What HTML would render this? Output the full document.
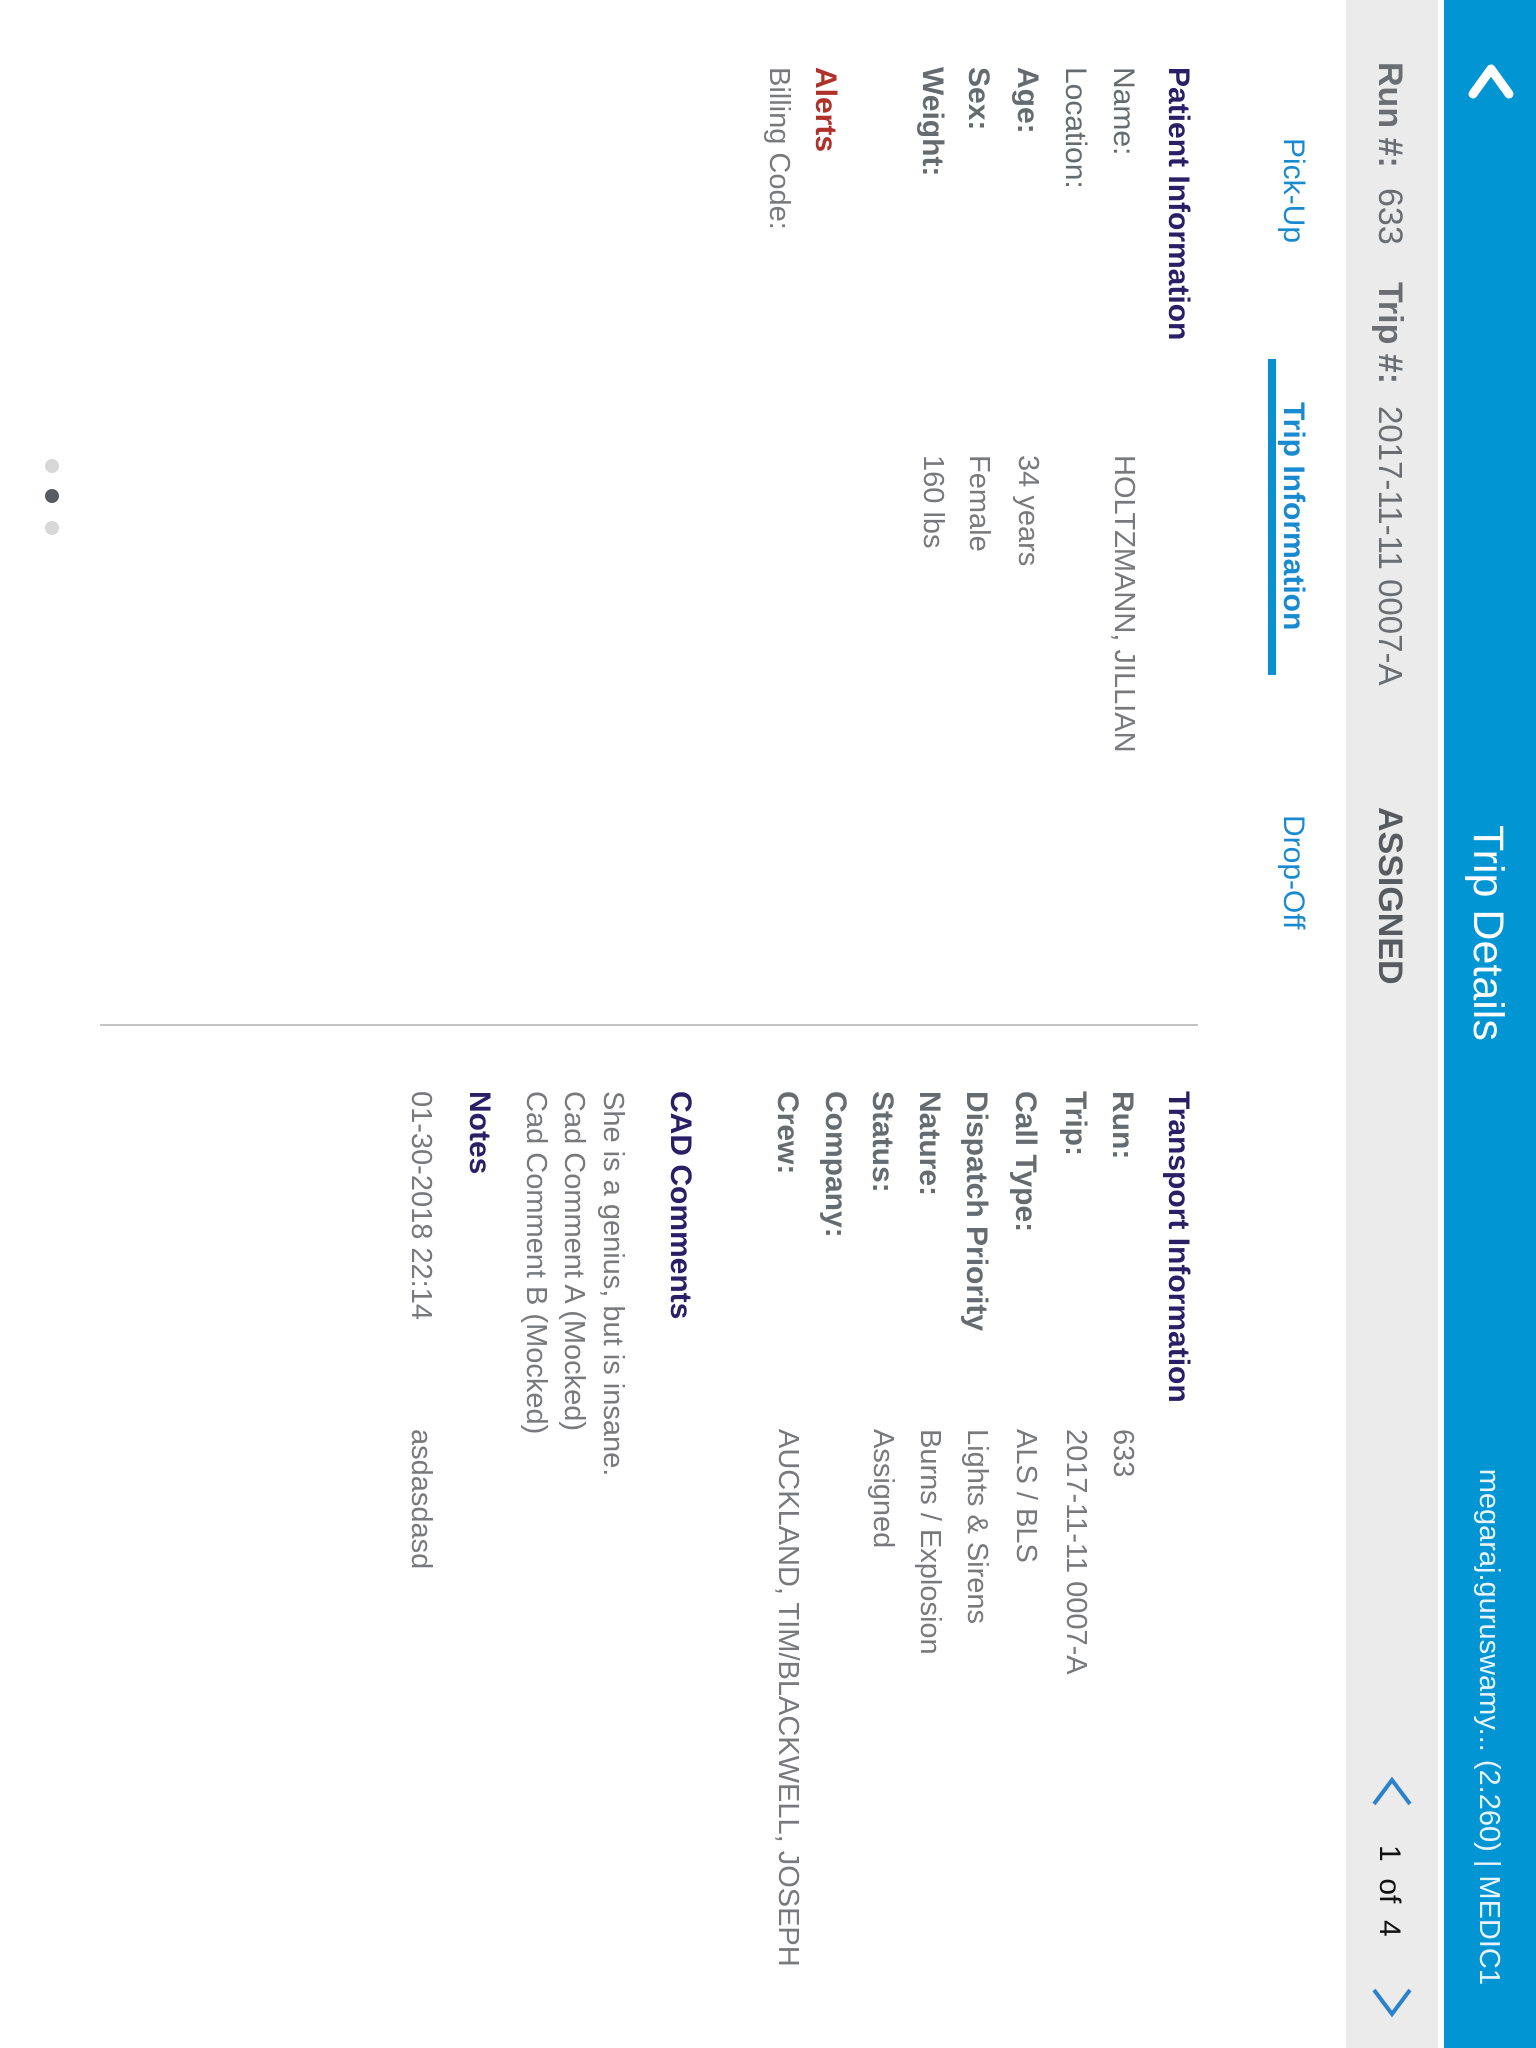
<!DOCTYPE html>
<html><head><meta charset="utf-8">
<style>
html,body{margin:0;padding:0;width:1536px;height:2048px;overflow:hidden;background:#fff}
#r{position:absolute;left:0;top:0;width:2048px;height:1536px;transform-origin:0 0;transform:translateX(1536px) rotate(90deg);background:#fff;font-family:"Liberation Sans",sans-serif}
.t{position:absolute;line-height:1;white-space:nowrap}
.f30{font-size:30px}
.lab{color:#666b70;font-size:30px}
.b{font-weight:bold}
.val{color:#77797c;font-size:29px}
.h{color:#2a1f66;font-weight:bold;font-size:30px}
</style></head><body>
<div id="r">
  <div style="position:absolute;left:0;top:0;width:2048px;height:92px;background:#0295d3"></div>
  <div class="t" style="left:825px;top:27px;font-size:43px;color:#fff">Trip Details</div>
  <div class="t" style="right:63px;top:33px;font-size:29px;color:#e8f4fb">megaraj.guruswamy... (2.260) | MEDIC1</div>

  <div style="position:absolute;left:0;top:98px;width:2048px;height:92px;background:#ebebeb"></div>
  <div class="t" style="left:62px;top:129px;font-size:34px;color:#6a6e72"><b>Run #:</b></div>
  <div class="t" style="left:188px;top:129px;font-size:34px;color:#6a6e72">633</div>
  <div class="t" style="left:282px;top:129px;font-size:34px;color:#6a6e72"><b>Trip #:</b></div>
  <div class="t" style="left:406px;top:129px;font-size:33px;color:#6a6e72">2017-11-11 0007-A</div>
  <div class="t" style="left:807px;top:129px;font-size:34px;color:#575b5f;font-weight:bold">ASSIGNED</div>
  <div class="t" style="left:1845px;top:132px;font-size:30px;color:#111">1&nbsp;&nbsp;of&nbsp;&nbsp;4</div>

  <svg style="position:absolute;left:0;top:0" width="2048" height="200">
    <polyline points="94,27 69,45 94,63" fill="none" stroke="#fff" stroke-width="9" stroke-linecap="round" stroke-linejoin="round"/>
    <polyline points="1804,126 1780,144 1804,162" fill="none" stroke="#2b82c9" stroke-width="4"/>
    <polyline points="1990,126 2014,144 1990,162" fill="none" stroke="#2b82c9" stroke-width="4"/>
  </svg>

  <div class="t f30" style="left:138px;top:228px;color:#1a8ad0">Pick-Up</div>
  <div class="t f30 b" style="left:402px;top:228px;color:#1a8ad0">Trip Information</div>
  <div class="t f30" style="left:815px;top:228px;color:#1a8ad0">Drop-Off</div>
  <div style="position:absolute;left:359px;top:260px;width:316px;height:8px;background:#0a8fd2"></div>

  <div class="t h" style="left:67px;top:343px">Patient Information</div>
  <div class="t lab" style="left:67px;top:398px">Name:</div>
  <div class="t lab" style="left:67px;top:446px">Location:</div>
  <div class="t lab b" style="left:67px;top:494px">Age:</div>
  <div class="t lab b" style="left:67px;top:543px">Sex:</div>
  <div class="t lab b" style="left:67px;top:589px">Weight:</div>
  <div class="t val" style="left:455px;top:398px">HOLTZMANN, JILLIAN</div>
  <div class="t val" style="left:455px;top:494px">34 years</div>
  <div class="t val" style="left:455px;top:543px">Female</div>
  <div class="t val" style="left:455px;top:589px">160 lbs</div>
  <div class="t f30 b" style="left:67px;top:696px;color:#b0302a">Alerts</div>
  <div class="t val" style="left:67px;top:743px">Billing Code:</div>

  <div style="position:absolute;left:1024px;top:338px;width:2px;height:1098px;background:#c4c4c4"></div>

  <div class="t h" style="left:1091px;top:343px">Transport Information</div>
  <div class="t lab b" style="left:1091px;top:399px">Run:</div>
  <div class="t lab b" style="left:1091px;top:446px">Trip:</div>
  <div class="t lab b" style="left:1091px;top:496px">Call Type:</div>
  <div class="t lab b" style="left:1091px;top:545px">Dispatch Priority</div>
  <div class="t lab b" style="left:1091px;top:592px">Nature:</div>
  <div class="t lab b" style="left:1091px;top:639px">Status:</div>
  <div class="t lab b" style="left:1091px;top:686px">Company:</div>
  <div class="t lab b" style="left:1091px;top:734px">Crew:</div>
  <div class="t val" style="left:1429px;top:399px">633</div>
  <div class="t val" style="left:1429px;top:446px">2017-11-11 0007-A</div>
  <div class="t val" style="left:1429px;top:496px">ALS / BLS</div>
  <div class="t val" style="left:1429px;top:545px">Lights &amp; Sirens</div>
  <div class="t val" style="left:1429px;top:592px">Burns / Explosion</div>
  <div class="t val" style="left:1429px;top:639px">Assigned</div>
  <div class="t val" style="left:1429px;top:734px">AUCKLAND, TIM/BLACKWELL, JOSEPH</div>
  <div class="t h" style="left:1091px;top:841px">CAD Comments</div>
  <div class="t val" style="left:1091px;top:909px">She is a genius, but is insane.</div>
  <div class="t val" style="left:1091px;top:948px">Cad Comment A (Mocked)</div>
  <div class="t val" style="left:1091px;top:986px">Cad Comment B (Mocked)</div>
  <div class="t h" style="left:1091px;top:1042px">Notes</div>
  <div class="t val" style="left:1091px;top:1101px">01-30-2018 22:14</div>
  <div class="t val" style="left:1429px;top:1101px">asdasdasd</div>

  <div style="position:absolute;left:459px;top:1477px;width:14px;height:14px;border-radius:50%;background:#d8d8d8"></div>
  <div style="position:absolute;left:489px;top:1477px;width:14px;height:14px;border-radius:50%;background:#565c61"></div>
  <div style="position:absolute;left:521px;top:1477px;width:14px;height:14px;border-radius:50%;background:#d8d8d8"></div>
</div>
</body></html>
